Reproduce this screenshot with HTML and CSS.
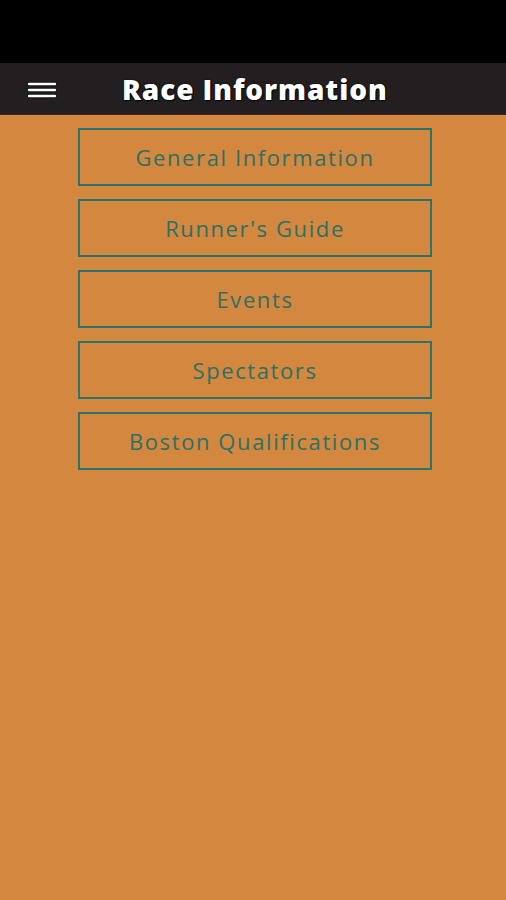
FILE: index.html
```html
<!DOCTYPE html>
<html lang="en">
<head>
    <meta charset="UTF-8">
    <title>Race Information</title>
    <link rel="stylesheet" href="styles.css">
</head>
<body>
<div class="status"></div>
<div class="header">
    <button class="menu" aria-label="menu">
        <svg width="32" height="18" viewBox="0 0 32 18">
            <g stroke="#111" stroke-width="4.5" stroke-linecap="round">
                <line x1="3" y1="3" x2="29" y2="3"/>
                <line x1="3" y1="9" x2="29" y2="9"/>
                <line x1="3" y1="15" x2="29" y2="15"/>
            </g>
            <g stroke="#fff" stroke-width="2.4" stroke-linecap="round">
                <line x1="3" y1="3" x2="29" y2="3"/>
                <line x1="3" y1="9" x2="29" y2="9"/>
                <line x1="3" y1="15" x2="29" y2="15"/>
            </g>
        </svg>
    </button>
    <h1>Race Information</h1>
</div>
<div class="list">
    <a class="item" href="#">General Information</a>
    <a class="item" href="#">Runner's Guide</a>
    <a class="item" href="#">Events</a>
    <a class="item" href="#">Spectators</a>
    <a class="item" href="#">Boston Qualifications</a>
</div>
</body>
</html>
```
FILE: styles.css
```css
body {
    margin: 0;
    background: #d3873f;
    font-family: "Open Sans", "Noto Sans", sans-serif;
    height: 900px;
}

.status {
    height: 63px;
    background: #000;
}

.header {
    height: 51px;
    background: #231f20;
    border-bottom: 1px solid #3a2a1c;
    display: flex;
    align-items: center;
}

.menu {
    background: none;
    border: 0;
    padding: 0;
    margin-left: 26px;
    width: 32px;
    height: 18px;
    display: flex;
    margin-top: 2px;
}

.header h1 {
    margin: 0 0 0 64px;
    color: #fff;
    font-size: 28px;
    font-weight: 800;
    letter-spacing: 0.9px;
    text-shadow: 0 0 2px #000, 1px 1px 1px #000;
}

.list {
    display: flex;
    flex-direction: column;
    gap: 13px;
    padding: 13px 0 0 78px;
}

.item {
    box-sizing: border-box;
    width: 354px;
    height: 58px;
    border: 2px solid #2b7469;
    display: flex;
    align-items: center;
    justify-content: center;
    color: #2b7167;
    font-size: 22px;
    text-decoration: none;
    letter-spacing: 1.6px;
}
```
